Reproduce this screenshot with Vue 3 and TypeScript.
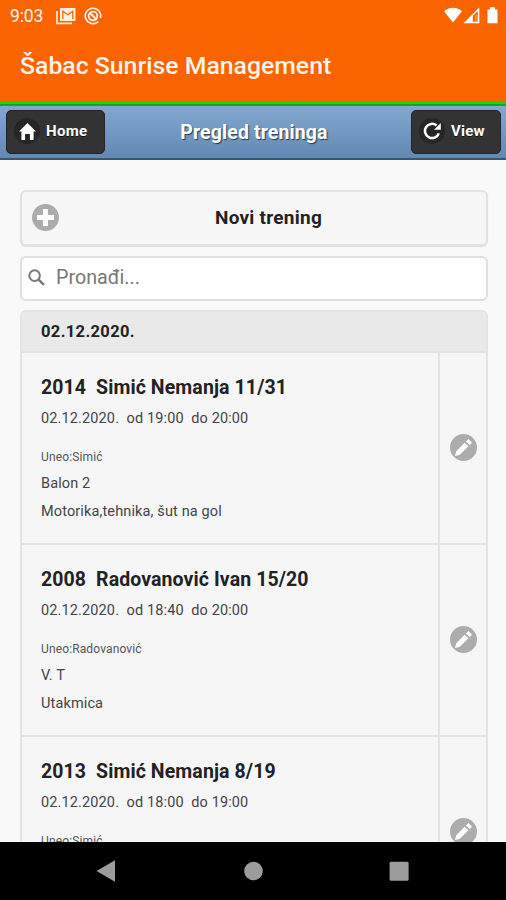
<script setup lang="ts">
interface Training {
  title: string
  time: string
  author: string
  place: string
  note: string
}

const trainings: Training[] = [
  { title: '2014  Simić Nemanja 11/31', time: '02.12.2020.  od 19:00  do 20:00', author: 'Uneo:Simić', place: 'Balon 2', note: 'Motorika,tehnika, šut na gol' },
  { title: '2008  Radovanović Ivan 15/20', time: '02.12.2020.  od 18:40  do 20:00', author: 'Uneo:Radovanović', place: 'V. T', note: 'Utakmica' },
  { title: '2013  Simić Nemanja 8/19', time: '02.12.2020.  od 18:00  do 19:00', author: 'Uneo:Simić', place: '', note: '' },
]
</script>

<template>
  <div class="screen">
    <header class="app-bar">
      <div class="status">
        <span class="clock">9:03</span>
        <svg class="s-mail" width="20" height="18" viewBox="0 0 20 18">
          <path d="M1 4v12.3h15" fill="none" stroke="#fff" stroke-opacity=".85" stroke-width="1.7" />
          <rect x="4" y="1" width="15.5" height="13" rx="1" fill="#fff" fill-opacity=".9" />
          <path d="M6.8 12V4.2l5 3.6 5-3.6V12" fill="none" stroke="#f96400" stroke-width="1.3" />
        </svg>
        <svg class="s-sync" width="18" height="18" viewBox="0 0 18 18" fill="none" stroke="#fff" stroke-opacity=".92">
          <path d="M14.2 14.6A7.7 7.7 0 1 1 16.4 11" stroke-width="1.7" />
          <circle cx="9" cy="9" r="4.3" stroke-width="1.8" />
          <path d="M6 6l6.8 6.8" stroke-width="2" />
        </svg>
        <span class="grow"></span>
        <svg width="58" height="18" viewBox="0 0 58 18" fill="#fff">
          <path d="M0 4.3C5-.6 13-.6 18 4.3L9 15.5z" />
          <path d="M19.5 16.3L35.3.6v15.7z" />
          <path d="M28.8 9l5-5v10.7h-5z" fill="#f96400" />
          <path d="M30.8 9.3l2.5-2.6v7.5h-2.5z" fill="#fff" fill-opacity=".25" />
          <path d="M43.5 2.5H46V.3h5v2.2h2.5v13.8h-10z" />
        </svg>
      </div>
      <h1>Šabac Sunrise Management</h1>
    </header>
    <div class="toolbar">
      <button class="nav-btn home">
        <span class="disc"><svg width="17" height="17" viewBox="0 0 14 14" fill="#fff"><path d="M7 0L0 7h2v7h3V9h4v5h3V7h2z" /></svg></span>
        <span>Home</span>
      </button>
      <h2>Pregled treninga</h2>
      <button class="nav-btn view">
        <span class="disc"><svg width="18" height="18" viewBox="0 0 18 18"><path d="M15.8 11.3A7.1 7.1 0 1 1 13.6 3.5" fill="none" stroke="#fff" stroke-width="2.5" /><path d="M17.8 1v6.8H11z" fill="#fff" /></svg></span>
        <span>View</span>
      </button>
    </div>
    <main>
      <button class="new-btn">
        <span class="round"><svg width="17" height="17" viewBox="0 0 14 14" fill="#fff"><path d="M14 5H9V0H5v5H0v4h5v5h4V9h5z" /></svg></span>
        <span class="new-label">Novi trening</span>
      </button>
      <label class="search">
        <svg width="17" height="17" viewBox="0 0 17 17" fill="none" stroke="#777"><circle cx="6.6" cy="6.6" r="5.3" stroke-width="2" /><path d="M10.4 10.4l5.5 5.5" stroke-width="2.4" /></svg>
        <span>Pronađi...</span>
      </label>
      <section class="list">
        <div class="divider">02.12.2020.</div>
        <article v-for="t in trainings" :key="t.title" class="row">
          <div class="info">
            <h3>{{ t.title }}</h3>
            <p class="time">{{ t.time }}</p>
            <p class="author">{{ t.author }}</p>
            <p class="place">{{ t.place }}</p>
            <p class="note">{{ t.note }}</p>
          </div>
          <div class="edit">
            <span class="round"><svg width="17" height="17" viewBox="0 0 14 14" fill="#fff"><path d="M1 10l-1 4 4-1 7-7-3-3zM11 0L9 2l3 3 2-2z" /></svg></span>
          </div>
        </article>
      </section>
    </main>
    <nav class="sys-nav">
      <svg width="506" height="58" viewBox="0 0 506 58" fill="#9c9c9c">
        <path d="M96.5 29l18.5-10.8v21.6z" />
        <circle cx="253.5" cy="29" r="9.3" />
        <rect x="389.6" y="19.7" width="19" height="19" rx="1.5" />
      </svg>
    </nav>
  </div>
</template>

<style>
body { margin: 0; overflow: hidden; }
</style>

<style scoped>
.screen { width: 506px; height: 900px; display: flex; flex-direction: column; overflow: hidden; background: #f9f9f9; font-family: Roboto, sans-serif; color: #222; }
h1, h2, h3, p { margin: 0; white-space: pre; }
button { border: 0; font-family: inherit; box-sizing: border-box; }
svg { display: block; flex: none; }
.app-bar { height: 102px; flex: none; background: #f96400; color: #fff3ea; }
.status { height: 31px; display: flex; align-items: center; padding: 0 4px 0 10px; box-sizing: border-box; }
.clock { font-size: 17.5px; line-height: 18px; padding-top: 1px; width: 46px; letter-spacing: -.1px; }
.s-sync { margin-left: 8px; }
.grow { flex: 1; }
h1 { font-size: 24.8px; line-height: 70px; font-weight: 500; padding-left: 20px; }
.toolbar { height: 58px; flex: none; box-sizing: border-box; display: grid; grid-template-columns: 99px 1fr 90px; align-items: center; padding: 3px 5px 0 6px; border-bottom: 2px solid #3d566f; background: linear-gradient(#12dc0c 0 2px, #14a51e 2px 4px, #82a8d0 4px, #6089b3); }
.toolbar h2 { font-size: 19.5px; color: #fff; text-shadow: 1px 1px 1px #243b50; text-align: center; padding: 1px 8px 0 0; letter-spacing: .12px; }
.nav-btn { height: 44px; display: flex; align-items: center; background: #333; color: #fff; font-size: 15px; font-weight: 700; border: 1px solid #252525; border-radius: 5px; padding: 0 0 1px 7px; gap: 6px; text-shadow: 0 1px 0 #111; }
.home { width: 99px; letter-spacing: .3px; }
.view { width: 90px; letter-spacing: .2px; }
.disc { width: 26px; height: 26px; flex: none; border-radius: 50%; background: #262626; display: flex; align-items: center; justify-content: center; }
main { flex: 1; min-height: 0; overflow: hidden; padding: 30px 18px 0 20px; }
.new-btn { width: 468px; height: 56px; display: flex; align-items: center; background: #f6f6f6; border: 2px solid #e2e2e2; border-radius: 6px; padding: 0 10px 2px; box-shadow: 0 1px 1px #e0e0e0; }
.round { width: 27px; height: 27px; flex: none; border-radius: 50%; background: #acacac; display: flex; align-items: center; justify-content: center; }
.new-label { flex: 1; text-align: center; font-size: 19px; font-weight: 700; color: #222; padding-left: 2px; letter-spacing: .25px; }
.search { width: 468px; height: 45px; box-sizing: border-box; display: flex; align-items: center; margin-top: 10px; background: #fff; border: 2px solid #e0e0e0; border-radius: 6px; padding: 0 6px 2px; gap: 11px; font-size: 19.7px; color: #777; }
.list { margin-top: 9px; width: 468px; box-sizing: border-box; border: 2px solid #e4e4e4; border-radius: 6px 6px 0 0; overflow: hidden; background: #f6f6f6; }
.divider { height: 41px; box-sizing: border-box; border-bottom: 2px solid #e2e2e2; background: #e9e9e9; padding-left: 19px; line-height: 39px; font-size: 16.5px; font-weight: 700; letter-spacing: .35px; }
.row { height: 192px; display: flex; box-sizing: border-box; border-bottom: 2px solid #e4e4e4; }
.info { width: 416px; box-sizing: border-box; padding: 21px 0 0 19px; }
.edit { flex: 1; box-sizing: border-box; border-left: 2px solid #e4e4e4; display: flex; align-items: center; justify-content: center; padding-bottom: 1px; }
h3 { font-size: 19.5px; line-height: 28px; letter-spacing: .1px; }
p { height: 28px; line-height: 28px; font-size: 14.5px; color: #444; letter-spacing: .13px; }
.time { margin-top: 3px; }
.author { margin-top: 10px; font-size: 12px; color: #555; }
.place { margin-top: -1px; }
.sys-nav { height: 58px; flex: none; background: #000; }
</style>
